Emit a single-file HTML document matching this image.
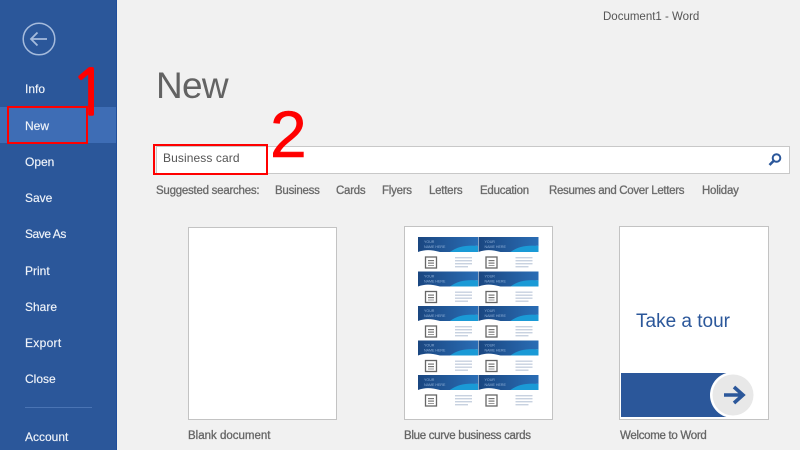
<!DOCTYPE html>
<html><head><meta charset="utf-8"><style>
html,body{margin:0;padding:0}
body{width:800px;height:450px;overflow:hidden;position:relative;background:#f1f1f1;font-family:"Liberation Sans",sans-serif}
.a{position:absolute;white-space:nowrap}
#side{left:0;top:0;width:117px;height:450px;background:#2b579a;border-right:1px solid #1f4e9c;box-sizing:border-box}
.m{left:25px;color:#f0f4fa;font-size:12px;line-height:16px;-webkit-text-stroke:.15px #f0f4fa}
.s{top:184px;font-size:11.5px;line-height:14px;color:#6a6a6a;letter-spacing:-.25px;-webkit-text-stroke:.3px #6a6a6a}
.c{background:#fff;border:1px solid #c3c3c3;box-sizing:border-box}
.l{top:429px;font-size:11.5px;line-height:14px;color:#666;letter-spacing:-.2px;-webkit-text-stroke:.3px #666}
</style></head><body>
<div class="a" style="left:603px;top:10px;font-size:11.5px;line-height:14px;color:#555">Document1 - Word</div>
<div class="a" id="side"></div>
<div class="a" style="left:0;top:107px;width:116px;height:36px;background:#3e6db5"></div>
<svg class="a" style="left:21px;top:22px" width="36" height="36" viewBox="0 0 36 36" fill="none" stroke="#a5bbdc" stroke-width="1.5"><circle cx="18" cy="17" r="15.8"/><path d="M10 17H26M16.5 10.5L10 17L16.5 23.5" stroke-width="1.8"/></svg>
<div class="a m" style="top:81px">Info</div>
<div class="a m" style="top:118px">New</div>
<div class="a m" style="top:154px">Open</div>
<div class="a m" style="top:190px">Save</div>
<div class="a m" style="top:226px;letter-spacing:-.45px">Save As</div>
<div class="a m" style="top:263px">Print</div>
<div class="a m" style="top:299px">Share</div>
<div class="a m" style="top:335px;letter-spacing:.3px">Export</div>
<div class="a m" style="top:371px">Close</div>
<div class="a" style="left:25px;top:407px;width:67px;height:1px;background:#4a74b4"></div>
<div class="a m" style="top:429px">Account</div>
<div class="a" style="left:7px;top:106px;width:81px;height:38px;border:2px solid #f00;box-sizing:border-box"></div>
<div class="a" style="left:70px;top:54px;font-family:'NanumGothic','Liberation Sans',sans-serif;font-size:63px;line-height:80px;color:#f00;-webkit-text-stroke:1.5px #f00">1</div>
<div class="a" style="left:156px;top:64px;font-size:37px;line-height:44px;color:#636363;letter-spacing:-.7px">New</div>
<div class="a" style="left:156px;top:146px;width:634px;height:28px;background:#fff;border:1px solid #c8c8c8;box-sizing:border-box"></div>
<svg class="a" style="left:767px;top:151px" width="17" height="17" viewBox="0 0 17 17" fill="none" stroke="#2b579a"><circle cx="9.5" cy="7" r="3.8" stroke-width="2"/><path d="M6.5 10L2.5 14" stroke-width="2.6"/></svg>
<div class="a" style="left:153px;top:144px;width:115px;height:31px;border:2px solid #f00;box-sizing:border-box"></div>
<div class="a" style="left:163px;top:151px;font-size:12px;line-height:15px;color:#555;letter-spacing:.1px">Business card</div>
<div class="a" style="left:270px;top:94px;font-size:66px;line-height:80px;color:#f00;-webkit-text-stroke:.6px #f00">2</div>
<div class="a s" style="left:156px">Suggested searches:</div>
<div class="a s" style="left:275px">Business</div>
<div class="a s" style="left:336px">Cards</div>
<div class="a s" style="left:382px">Flyers</div>
<div class="a s" style="left:429px">Letters</div>
<div class="a s" style="left:480px">Education</div>
<div class="a s" style="left:549px;letter-spacing:-.32px">Resumes and Cover Letters</div>
<div class="a s" style="left:702px">Holiday</div>
<div class="a c" style="left:188px;top:227px;width:149px;height:193px"></div>
<div class="a l" style="left:188px;letter-spacing:0">Blank document</div>
<div class="a c" style="left:404px;top:226px;width:149px;height:194px"></div>
<svg class="a" style="left:404px;top:226px" width="149" height="194" viewBox="0 0 149 194">
<defs>
<linearGradient id="g" x1="0" y1="0" x2="1" y2="0"><stop offset="0" stop-color="#1a4680"/><stop offset="1" stop-color="#2a6db5"/></linearGradient>
<g id="k">
<rect x="0" y="0" width="60" height="15" fill="url(#g)"/>
<path d="M0 15C8 12 14 13 22 15C34 18 48 8 60 9V15Z" fill="#fff"/>
<path d="M32 15C40 9 50 8 60 9V15Z" fill="#1a9ad6"/>
<text x="6" y="6" font-size="3.6" fill="#8fb0d8">YOUR</text>
<text x="6" y="11" font-size="3.6" fill="#8fb0d8">NAME HERE</text>
<rect x="7.5" y="20" width="11" height="11" fill="#fff" stroke="#666" stroke-width="1.3"/>
<rect x="10" y="23" width="6" height="1.2" fill="#777"/><rect x="10" y="25.5" width="6" height="1.2" fill="#777"/><rect x="10" y="28" width="6" height="1" fill="#999"/>
<rect x="37" y="20" width="17" height="1.4" fill="#c8d2e0"/><rect x="37" y="23" width="17" height="1.4" fill="#c8d2e0"/><rect x="37" y="26" width="17" height="1.4" fill="#c8d2e0"/><rect x="37" y="29" width="13" height="1.4" fill="#c8d2e0"/>
</g>
</defs>
<use href="#k" x="14" y="11"/><use href="#k" x="74.500" y="11"/>
<use href="#k" x="14" y="45.500"/><use href="#k" x="74.500" y="45.500"/>
<use href="#k" x="14" y="80"/><use href="#k" x="74.500" y="80"/>
<use href="#k" x="14" y="114.500"/><use href="#k" x="74.500" y="114.500"/>
<use href="#k" x="14" y="149"/><use href="#k" x="74.500" y="149"/>
</svg>
<div class="a l" style="left:404px;letter-spacing:-.3px">Blue curve business cards</div>
<div class="a c" style="left:619px;top:226px;width:150px;height:194px"></div>
<div class="a" style="left:636px;top:308px;font-size:19px;line-height:28px;color:#2b579a">Take a tour</div>
<div class="a" style="left:621px;top:373px;width:107px;height:44px;background:#2b579a"></div>
<svg class="a" style="left:708px;top:370px" width="60" height="50" viewBox="0 0 60 50"><circle cx="25" cy="25" r="23" fill="#fff"/><circle cx="25" cy="25" r="20.500" fill="#e8e8e8"/><path d="M16 25H34M26 17L35 25L26 33" fill="none" stroke="#2b579a" stroke-width="3.6"/></svg>
<div class="a l" style="left:620px;letter-spacing:-.3px">Welcome to Word</div>
</body></html>
